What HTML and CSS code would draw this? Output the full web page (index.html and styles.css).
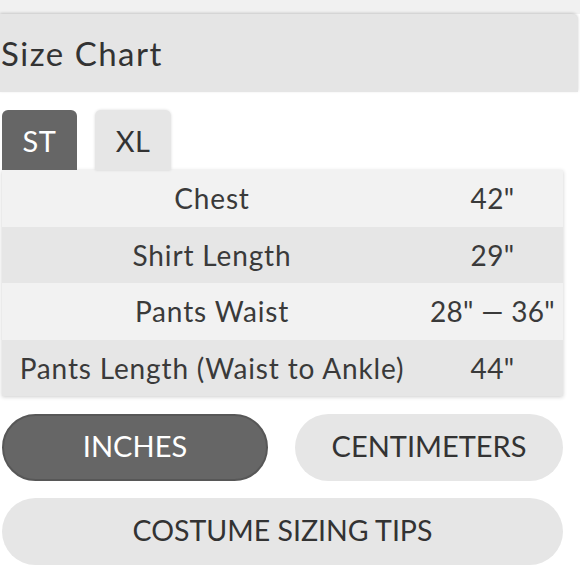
FILE: index.html
```html
<!DOCTYPE html>
<html>
<head>
<meta charset="utf-8">
<link rel="stylesheet" href="styles.css">
</head>
<body>
<div class="top-strip"></div>
<div class="header"><h1 class="title">Size Chart</h1></div>
<div class="tabs">
  <div class="tab tab-active">ST</div>
  <div class="tab">XL</div>
</div>
<div class="chart">
  <div class="row row-light"><div class="cell cell-name">Chest</div><div class="cell cell-val">42"</div></div>
  <div class="row row-dark"><div class="cell cell-name">Shirt Length</div><div class="cell cell-val">29"</div></div>
  <div class="row row-light"><div class="cell cell-name">Pants Waist</div><div class="cell cell-val">28" — 36"</div></div>
  <div class="row row-dark"><div class="cell cell-name">Pants Length (Waist to Ankle)</div><div class="cell cell-val">44"</div></div>
</div>
<div class="units">
  <div class="btn btn-active">INCHES</div>
  <div class="btn">CENTIMETERS</div>
</div>
<div class="btn btn-wide">COSTUME SIZING TIPS</div>
</body>
</html>
```
FILE: styles.css
```css
html, body {
  margin: 0;
  padding: 0;
  background: #ffffff;
  font-family: Lato, "Open Sans", "Liberation Sans", sans-serif;
  color: #3a3a3a;
}
.top-strip {
  height: 14px;
  background: #f1f1f1;
}
.header {
  height: 78px;
  margin-right: 2px;
  background: #e5e5e5;
  border-top-right-radius: 6px;
  box-shadow: 0 -1px 3px rgba(0,0,0,0.18);
  display: flex;
  align-items: center;
}
.title {
  margin: 0;
  padding-left: 1px;
  font-size: 33px;
  font-weight: 400;
  color: #333333;
  letter-spacing: 1.5px;
}
.tabs {
  display: flex;
  gap: 18px;
  padding: 18px 0 0 2px;
}
.tab {
  width: 76px;
  height: 60px;
  border-radius: 6px 6px 0 0;
  background: #e6e6e6;
  box-shadow: 0 0 3px rgba(0,0,0,0.15);
  display: flex;
  align-items: center;
  justify-content: center;
  font-size: 29px;
  letter-spacing: 0.5px;
  color: #333333;
}
.tab-active {
  width: 75px;
  background: #666666;
  color: #ffffff;
  box-shadow: none;
}
.chart {
  margin-left: 2px;
  width: 561px;
  box-shadow: 0 1px 4px rgba(0,0,0,0.2);
}
.row {
  display: grid;
  grid-template-columns: 420px 141px;
  height: 56.5px;
  align-items: center;
}
.row-light { background: #f2f2f2; }
.row-dark { background: #e6e6e6; }
.cell {
  text-align: center;
  font-size: 28px;
  letter-spacing: 0.85px;
  color: #3a3a3a;
}
.cell-val {
  letter-spacing: 0.3px;
}
.units {
  display: flex;
  gap: 27px;
  padding: 18px 0 0 2px;
}
.btn {
  width: 268px;
  height: 67px;
  padding-bottom: 4px;
  border-radius: 34px;
  background: #e6e6e6;
  display: flex;
  align-items: center;
  justify-content: center;
  font-size: 29px;
  color: #333333;
  box-sizing: border-box;
}
.btn-active {
  width: 266px;
  background: #666666;
  color: #ffffff;
  border: 2px solid #575757;
}
.btn-wide {
  margin: 17px 0 0 2px;
  width: 561px;
  font-size: 28.5px;
}
```
